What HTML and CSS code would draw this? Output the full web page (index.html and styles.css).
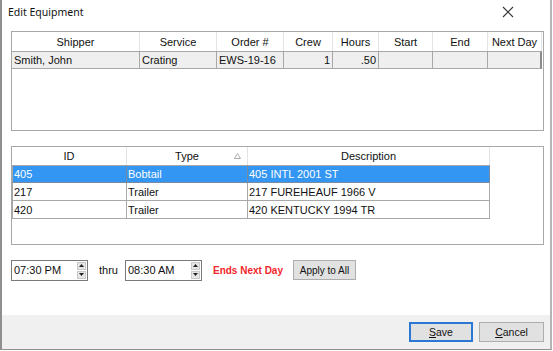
FILE: index.html
```html
<!DOCTYPE html>
<html>
<head>
<meta charset="utf-8">
<link rel="stylesheet" href="styles.css">
</head>
<body>
<div class="window">
  <div class="titlebar">
    <span class="title">Edit Equipment</span>
    <svg class="close" width="12" height="12" viewBox="0 0 12 12"><path d="M1 1 L11 11 M11 1 L1 11" stroke="#333" stroke-width="1.1" fill="none"/></svg>
  </div>
  <div class="content">
    <div class="panel panel-top">
      <div class="grid grid-top">
        <div class="hd">Shipper</div>
        <div class="hd">Service</div>
        <div class="hd">Order #</div>
        <div class="hd">Crew</div>
        <div class="hd">Hours</div>
        <div class="hd">Start</div>
        <div class="hd">End</div>
        <div class="hd">Next Day</div>
        <div class="cell">Smith, John</div>
        <div class="cell">Crating</div>
        <div class="cell">EWS-19-16</div>
        <div class="cell num">1</div>
        <div class="cell num">.50</div>
        <div class="cell"></div>
        <div class="cell"></div>
        <div class="cell last"></div>
      </div>
    </div>
    <div class="panel panel-bottom">
      <div class="grid grid-eq">
        <div class="hd">ID</div>
        <div class="hd sort">Type<svg class="tri" width="7" height="6" viewBox="0 0 7 6"><path d="M3.5 0.5 L6.5 5.5 L0.5 5.5 Z" fill="none" stroke="#aaa" stroke-width="1"/></svg></div>
        <div class="hd">Description</div>
        <div class="row sel"><div class="c">405</div><div class="c">Bobtail</div><div class="c">405 INTL 2001 ST</div></div>
        <div class="row"><div class="c">217</div><div class="c">Trailer</div><div class="c">217 FUREHEAUF 1966 V</div></div>
        <div class="row"><div class="c">420</div><div class="c">Trailer</div><div class="c">420 KENTUCKY 1994 TR</div></div>
      </div>
    </div>
    <div class="controls">
      <div class="spin"><span class="val">07:30 PM</span><div class="arrows"><div class="ab"><svg width="5" height="3" viewBox="0 0 5 3"><path d="M2.5 0 L5 3 L0 3 Z" fill="#222"/></svg></div><div class="ab"><svg width="5" height="3" viewBox="0 0 5 3"><path d="M0 0 L5 0 L2.5 3 Z" fill="#222"/></svg></div></div></div>
      <span class="thru">thru</span>
      <div class="spin"><span class="val">08:30 AM</span><div class="arrows"><div class="ab"><svg width="5" height="3" viewBox="0 0 5 3"><path d="M2.5 0 L5 3 L0 3 Z" fill="#222"/></svg></div><div class="ab"><svg width="5" height="3" viewBox="0 0 5 3"><path d="M0 0 L5 0 L2.5 3 Z" fill="#222"/></svg></div></div></div>
      <span class="ends">Ends Next Day</span>
      <button class="btn apply">Apply to All</button>
    </div>
  </div>
  <div class="footer">
    <button class="btn fbtn default"><u>S</u>ave</button>
    <button class="btn fbtn"><u>C</u>ancel</button>
  </div>
</div>
</body>
</html>
```
FILE: styles.css
```css
* { box-sizing: border-box; }
html, body { margin: 0; padding: 0; background: #fff; }
body {
  font-family: "Liberation Sans", Arial, sans-serif;
  font-size: 11px;
  color: #111;
}
.window {
  width: 552px;
  height: 350px;
  border-left: 2px solid #8f8f8f;
  border-right: 2px solid #b5b5b5;
  border-bottom: 1px solid #8f8f8f;
  display: flex;
  flex-direction: column;
  background: #fff;
}
.titlebar {
  height: 30px;
  display: flex;
  align-items: center;
  justify-content: space-between;
  padding: 0 36px 0 6px;
}
.title {
  font-family: "Noto Sans", "Open Sans", sans-serif;
  font-size: 10.5px;
  color: #111;
  margin-top: -6px;
}
.close { margin-top: -6px; }
.content {
  flex: 1;
  padding: 1px 6px 0 9px;
  display: flex;
  flex-direction: column;
}
.panel {
  border: 1px solid #a8a8a8;
  width: 533px;
}
.panel-top { height: 100px; }
.panel-bottom { height: 99px; margin-top: 15px; }
.grid { display: grid; }
.grid-top {
  grid-template-columns: 128px 77px 67px 49px 46px 54px 55px 54px;
  grid-template-rows: 19px 18px;
  width: 530px;
}
.hd {
  display: flex;
  align-items: center;
  justify-content: center;
  border-right: 1px solid #e3e3e3;
  color: #111;
  position: relative;
}
.grid-top .cell {
  background: #efefef;
  border-top: 1px solid #a8a8a8;
  border-bottom: 1px solid #a8a8a8;
  border-right: 1px solid #a8a8a8;
  padding: 0 2px;
  display: flex;
  align-items: center;
  white-space: nowrap;
}
.grid-top .cell.num { justify-content: flex-end; }
.grid-top .cell.last { border-right: 2px solid #8a8a8a; }
.grid-eq {
  grid-template-columns: 115px 121px 242px;
  grid-template-rows: 18px repeat(3, 18px);
  width: 478px;
}
.grid-eq .row { display: contents; }
.grid-eq .c {
  display: flex;
  align-items: center;
  padding: 0 1px;
  border-right: 1px solid #a8a8a8;
  border-bottom: 1px solid #a8a8a8;
  white-space: nowrap;
}
.grid-eq .row .c:first-child { border-left: 1px solid #a8a8a8; }
.grid-eq .row:nth-child(4) .c { border-top: 1px solid #a8a8a8; }
.grid-eq .sel .c {
  background: #3396f2;
  color: #fff;
  border-color: #7a8aa0;
}
.tri { position: absolute; right: 6px; top: 6px; }
.controls {
  display: flex;
  align-items: center;
  margin-top: 14px;
  height: 22px;
}
.spin {
  width: 77px;
  height: 21px;
  border: 1px solid #7a7a7a;
  display: flex;
  align-items: center;
  justify-content: space-between;
  padding: 1px 0 1px 2px;
  background: #fff;
}
.val { line-height: 17px; }
.arrows {
  width: 9px;
  height: 17px;
  margin-right: 1px;
  display: flex;
  flex-direction: column;
  gap: 1px;
}
.ab {
  flex: 1;
  background: #e6e6e6;
  border: 1px solid #c8c8c8;
  display: flex;
  align-items: center;
  justify-content: center;
}
.thru { margin: 0 7px 0 11px; }
.ends {
  color: #f2262a;
  font-weight: bold;
  font-size: 10px;
  margin-left: 11px;
}
.btn {
  font-family: "Liberation Sans", Arial, sans-serif;
  font-size: 10.5px;
  color: #111;
  background: #e1e1e1;
  border: 1px solid #adadad;
  padding: 0;
  margin: 0;
}
.apply {
  width: 63px;
  height: 20px;
  margin-left: 10px;
  font-size: 10px;
}
.footer {
  height: 34px;
  background: #f0f0f0;
  display: flex;
  justify-content: flex-end;
  align-items: center;
  padding: 0 6px 0 0;
  gap: 6px;
}
.fbtn { width: 65px; height: 20px; margin-top: -1px; }
.fbtn.default { border: 1px solid #2a78d4; box-shadow: inset 0 0 0 1px #2a78d4; width: 64px; }
```
